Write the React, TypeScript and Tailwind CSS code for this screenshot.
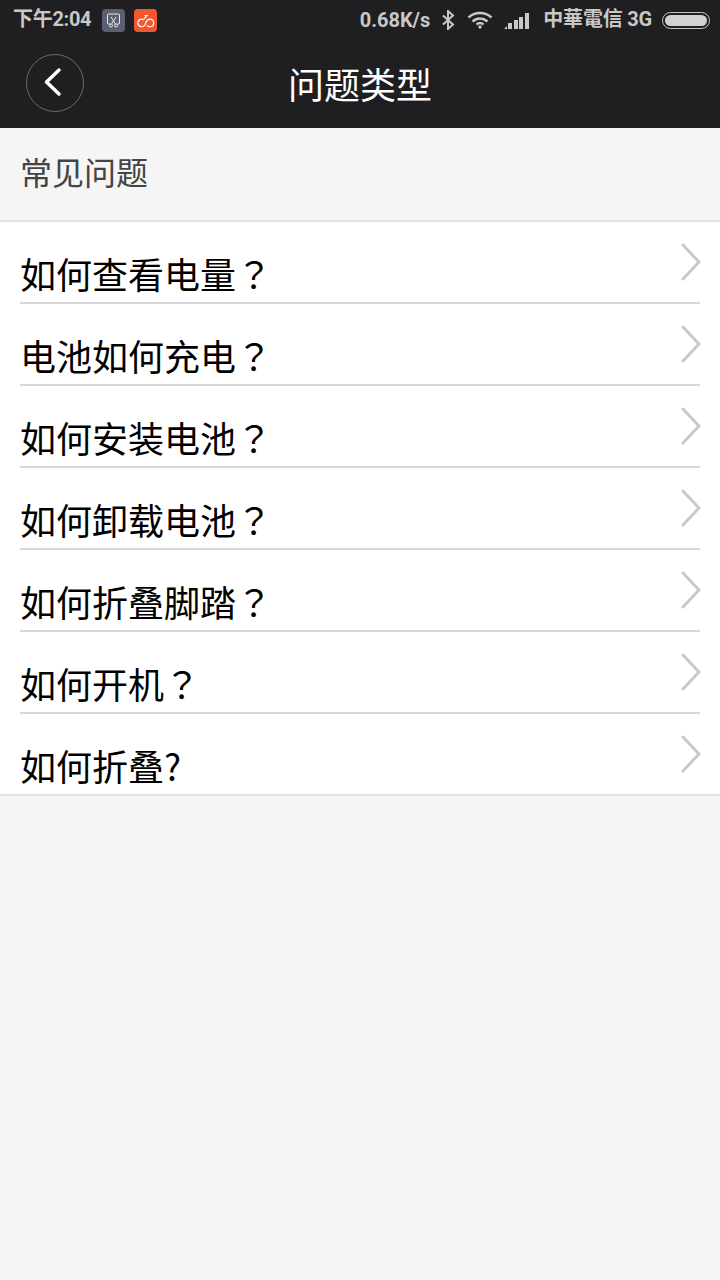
const rows = [
  { text: '如何查看电量', mark: '？' },
  { text: '电池如何充电', mark: '？' },
  { text: '如何安装电池', mark: '？' },
  { text: '如何卸载电池', mark: '？' },
  { text: '如何折叠脚踏', mark: '？' },
  { text: '如何开机', mark: '？' },
  { text: '如何折叠', mark: '?' },
];

function StatusBar() {
  return (
    <div className="flex h-10 items-center justify-between pl-[13px] pr-[10px] text-[#c8c8c8] font-bold">
      <div className="flex items-center">
        <span className="text-[20px] leading-none mt-[-3px] tracking-[-0.3px]">下午2:04</span>
        <div className="ml-[11px] flex h-[23px] w-[23px] items-center justify-center rounded-[4px] bg-[#5a6072]">
          <svg width="15" height="15" viewBox="0 0 15 15" fill="none" stroke="#e8e8e8" strokeWidth="1">
            <path d="M4 11H2.500a1 1 0 0 1-1-1V2a1 1 0 0 1 1-1h10a1 1 0 0 1 1 1v8a1 1 0 0 1-1 1H11" />
            <path d="M5 4l4.500 7M10 4l-4.500 7" />
            <circle cx="5" cy="12.500" r="1.500" />
            <circle cx="10" cy="12.500" r="1.500" />
          </svg>
        </div>
        <div className="ml-[9px] flex h-[23px] w-[23px] items-center justify-center rounded-[4px] bg-[#f4572d]">
          <svg width="19" height="15" viewBox="0 0 19 15" fill="none" stroke="#fff" strokeWidth="1.200">
            <path d="M9.500 10a3.800 3.800 0 1 1-2-3.400L11 2.500H8.500" />
            <path d="M9.500 10c1-2 2.500-3.800 4.500-3.800a3.800 3.800 0 1 1-3 6.200" />
          </svg>
        </div>
      </div>
      <div className="flex items-center">
        <span className="text-[20px] leading-none mt-[-1px]">0.68K/s</span>
        <svg className="ml-[11px]" width="14" height="20" viewBox="0 0 14 20" fill="none" stroke="#c8c8c8" strokeWidth="2">
          <path d="M2 5.500l10 9-5 4.500V1l5 4.500-10 9" />
        </svg>
        <svg className="ml-[12px]" width="26" height="18" viewBox="0 0 26 18" fill="none" stroke="#c8c8c8" strokeWidth="2.400">
          <path d="M1.500 6.500c6.500-6 16.500-6 23 0" />
          <path d="M5.500 10.500c4.500-4 10.500-4 15 0" />
          <path d="M9.500 13.500c2.200-1.800 4.800-1.800 7 0" />
          <circle cx="13" cy="16" r="1.700" fill="#c8c8c8" stroke="none" />
        </svg>
        <svg className="ml-[11px]" width="26" height="17" viewBox="0 0 26 17" fill="#c8c8c8">
          <path d="M0 17l3-3v3z" />
          <rect x="4" y="11" width="4" height="6" />
          <rect x="10" y="8" width="4" height="9" />
          <rect x="15" y="5" width="4" height="12" />
          <rect x="21" y="1" width="4" height="16" />
        </svg>
        <span className="ml-[13px] text-[20px] leading-none mt-[-2px] tracking-[-0.2px]">中華電信 3G</span>
        <div className="ml-[10px] flex h-[17px] w-[48px] items-center rounded-full border border-[#c8c8c8] p-[2px]">
          <div className="h-full w-full rounded-full bg-[#d2d2d2]" />
        </div>
      </div>
    </div>
  );
}

export default function App() {
  return (
    <div
      className="flex min-h-[1280px] w-[720px] flex-col bg-[#f5f5f5]"
      style={{ fontFamily: 'Roboto, "Noto Sans CJK SC", sans-serif' }}
    >
      <div className="bg-[#1f1f21]">
        <StatusBar />
        <div className="relative flex h-[88px] items-center justify-center">
          <button className="absolute left-[26px] top-[14px] flex h-[58px] w-[58px] items-center justify-center rounded-full border border-[#6a6a6a]">
            <svg className="ml-[-5px] mt-[-2px]" width="20" height="30" viewBox="0 0 20 30" fill="none" stroke="#fff" strokeWidth="3.500" strokeLinecap="round" strokeLinejoin="round">
              <path d="M16 3L3.500 15 16 27" />
            </svg>
          </button>
          <h1 className="text-[36px] font-normal leading-none text-white mt-[5px]">问题类型</h1>
        </div>
      </div>

      <div className="flex h-[92px] items-center pl-[20px] text-[32px] leading-none text-[#444]">常见问题</div>

      <div className="border-y-2 border-[#e2e2e2] bg-white">
        {rows.map((row, i) => {
          const last = i === rows.length - 1;
          return (
            <div key={row.text} className={`relative flex items-end pl-[20px] ${last ? 'h-[80px]' : 'h-[82px]'}`}>
              <div className={`flex h-full flex-1 items-end ${last ? '' : 'mr-[20px] border-b-2 border-[#d8d8d8]'}`}>
                <span className="pb-[3px] text-[36px] leading-[44px] text-black">
                  {row.text}
                  <span style={{ fontFamily: '"Noto Sans CJK TC", sans-serif' }}>{row.mark}</span>
                </span>
              </div>
              <svg className="absolute right-[19px] top-[21px]" width="20" height="38" viewBox="0 0 20 38" fill="none" stroke="#c9c9c9" strokeWidth="3" strokeLinecap="round">
                <path d="M2 2l16 17L2 36" />
              </svg>
            </div>
          );
        })}
      </div>
    </div>
  );
}
